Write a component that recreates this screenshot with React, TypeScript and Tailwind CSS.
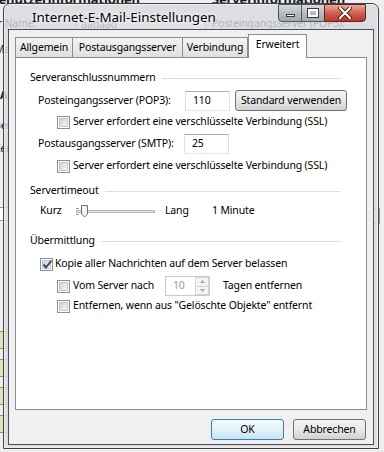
import React from 'react';

const Check = ({ checked = false }: { checked?: boolean }) => (
  <span className="flex h-[13px] w-[13px] shrink-0 items-center justify-center border border-[#8e8f8f] bg-white">
    <span className="relative flex h-[9px] w-[9px] items-center justify-center border border-[#c4c6c9] bg-linear-to-br from-[#cfd2d6] to-[#f7f7f7]">
      {checked && (
        <svg className="absolute -left-[1px] -top-[2px]" width="11" height="11" viewBox="0 0 11 11">
          <path d="M1.5 5.5 L4 8.5 L9.5 1.5" fill="none" stroke="#2a4a80" strokeWidth="2" />
        </svg>
      )}
    </span>
  </span>
);

const GroupHeader = ({ title }: { title: string }) => (
  <div className="mr-[25px] flex h-[16px] items-center">
    <span>{title}</span>
    <span className="ml-[6px] h-px flex-1 bg-[#d5dfe5]" />
  </div>
);

const TextBox = ({ value }: { value: string }) => (
  <div className="flex h-[20px] w-[45px] shrink-0 items-center border border-[#abadb3] border-b-[#e3e9ef] border-x-[#dbdfe6] bg-white pl-[7px]">
    {value}
  </div>
);

const Btn = ({ label, def = false, w }: { label: string; def?: boolean; w: string }) => (
  <div
    className={`flex h-[21px] ${w} shrink-0 items-center justify-center rounded-[3px] border ${
      def
        ? 'border-[#3c7fb1] bg-linear-to-b from-[#f2f9fd] via-[#e3f2fb] to-[#c6e2f3]'
        : 'border-[#707070] bg-linear-to-b from-[#f3f3f3] via-[#e8e8e8] to-[#d2d2d2]'
    }`}
  >
    {label}
  </div>
);

const Tab = ({ label, w, active = false }: { label: string; w: string; active?: boolean }) => (
  <div
    className={`flex ${w} shrink-0 items-center justify-center border border-[#898c95] ${
      active
        ? 'relative z-10 -mb-px h-[24px] border-b-0 bg-white pb-[3px]'
        : 'h-[20px] border-b-0 bg-linear-to-b from-[#f3f3f3] to-[#e0e0e0] -ml-px first:ml-0'
    }`}
  >
    {label}
  </div>
);

export default function App() {
  return (
    <div className="relative h-[452px] w-[384px] overflow-hidden whitespace-nowrap bg-[#efefef] font-['Noto_Sans',sans-serif] text-[10.5px] tracking-[-0.15px] text-black">
      {/* window behind the dialog */}
      <div className="flex text-[#1a1a1a]">
        <div className="w-[222px] shrink-0 -ml-[10px]">
          <div className="-mt-[9px] h-[16px] text-[13px] font-bold leading-[16px]">Benutzerinformationen</div>
          <div className="mt-[9px] flex h-[16px] items-center gap-[40px]">
            <span className="-ml-[2px]">Ihr Name:</span>
            <span className="h-[16px] w-[130px] border border-[#999] bg-white pl-1">aadaad</span>
          </div>
          <div className="mt-[10px] -ml-[4px]">E-Mail-Adresse:</div>
          <div className="mt-[30px] pl-[10px] font-bold">Anmeldeinformationen</div>
          <div className="mt-[14px] pl-[4px]">Benutzername:</div>
          <div className="mt-[8px] pl-[4px]">Kennwort:</div>
          <div className="ml-[8px] mt-[50px] h-[14px] w-[60px] border border-[#999] bg-white" />
          <div className="mt-[110px] flex flex-col gap-[10px] pl-[8px]">
            {[0, 1, 2, 3].map((i) => (
              <span key={i} className="h-[18px] w-[12px] border border-[#9a9470] bg-[#e4dfb8]" />
            ))}
          </div>
        </div>
        <div className="flex-1">
          <div className="-mt-[9px] h-[16px] text-[13px] font-bold leading-[16px]">Serverinformationen</div>
          <div className="mt-[9px] flex h-[16px] items-center gap-[44px]">
            <span>Posteingangsserver (POP3):</span>
            <span className="h-[16px] w-[40px] border border-[#999] bg-white pl-1">ds</span>
          </div>
          <div className="mt-[12px] flex h-[16px] items-center justify-end">
            <span className="h-[16px] w-[20px] border border-[#999] bg-white pl-1">ds</span>
          </div>
          <div className="mt-[52px] pl-[148px] leading-[11px]">
            Ko
            <br />
            de
            <br />
            Ä
            <br />
            h)
          </div>
          <div className="ml-[148px] mt-[52px] h-[16px] w-[20px] border border-[#999] bg-white pl-[1px]">e</div>
          <div className="mt-[176px] pl-[150px]">er</div>
        </div>
      </div>

      {/* dialog */}
      <div className="absolute left-[3px] top-[3px] flex h-[446px] w-[376px] flex-col rounded-t-[7px] border border-[#3f4348] bg-[#d7dadd]/80 shadow-[inset_0_0_0_1px_rgba(255,255,255,0.5)]">
        <div className="flex h-[25px] shrink-0 items-start">
          <span className="ml-[28px] mt-[3px] text-[13.4px] leading-[20px] tracking-normal text-black [text-shadow:0_0_6px_#fff,0_0_3px_#fff]">
            Internet-E-Mail-Einstellungen
          </span>
          <div className="ml-auto mr-[12px] flex">
            <div className="flex h-[18px] w-[24px] items-center justify-center rounded-bl-[4px] border border-[#50565c] bg-linear-to-b from-[#d6dade] via-[#b7bcc1] to-[#a3a9ae]">
              <span className="mt-[5px] h-[3px] w-[9px] border border-[#3a3a3a] bg-white" />
            </div>
            <div className="-ml-px flex h-[18px] w-[24px] items-center justify-center border border-[#50565c] bg-linear-to-b from-[#d6dade] via-[#b7bcc1] to-[#a3a9ae]">
              <span className="h-[8px] w-[10px] border-2 border-white outline outline-1 outline-[#3a3a3a]" />
            </div>
            <div className="-ml-px flex h-[18px] w-[42px] items-center justify-center rounded-br-[4px] border border-[#5a2a22] bg-linear-to-b from-[#e9a99c] via-[#d0604c] to-[#b8382a]">
              <svg width="14" height="12" viewBox="0 0 14 12">
                <path d="M2 1 L12 11 M12 1 L2 11" stroke="#4a1a14" strokeWidth="4" strokeLinecap="round" />
                <path d="M2 1 L12 11 M12 1 L2 11" stroke="#fff" strokeWidth="2.2" strokeLinecap="round" />
              </svg>
            </div>
          </div>
        </div>

        <div className="mx-[4px] mb-[3px] flex flex-1 flex-col border border-[#4a4f55] bg-[#f0f0f0] px-[6px] pt-[3px]">
          {/* tabs */}
          <div className="flex h-[24px] items-end">
            <Tab label="Allgemein" w="w-[58px]" />
            <Tab label="Postausgangsserver" w="w-[111px]" />
            <Tab label="Verbindung" w="w-[66px]" />
            <Tab label="Erweitert" w="w-[59px]" active />
          </div>

          <div className="flex h-[353px] flex-col border border-[#898c95] bg-white pl-[14px] pt-[12px]">
            <GroupHeader title="Serveranschlussnummern" />
            <div className="ml-[8px] mt-[4px] flex h-[21px] items-center">
              <span className="w-[147px] shrink-0">Posteingangsserver (POP3):</span>
              <TextBox value="110" />
              <div className="ml-[5px]">
                <Btn label="Standard verwenden" w="w-[112px]" />
              </div>
            </div>
            <div className="ml-[27px] mt-[4px] flex h-[14px] items-center gap-[3px]">
              <Check />
              <span>Server erfordert eine verschlüsselte Verbindung (SSL)</span>
            </div>
            <div className="ml-[8px] mt-[5px] flex h-[20px] items-center">
              <span className="w-[146px] shrink-0">Postausgangsserver (SMTP):</span>
              <TextBox value="25" />
            </div>
            <div className="ml-[27px] mt-[5px] flex h-[14px] items-center gap-[3px]">
              <Check />
              <span>Server erfordert eine verschlüsselte Verbindung (SSL)</span>
            </div>

            <div className="mt-[10px]">
              <GroupHeader title="Servertimeout" />
            </div>
            <div className="ml-[10px] mt-[3px] flex h-[18px] items-center">
              <span className="w-[36px] shrink-0">Kurz</span>
              <svg width="80" height="18" viewBox="0 0 80 18">
                <rect x="0.5" y="8.5" width="78" height="2" fill="#e4e6e8" stroke="#b4b6b8" />
                <path d="M0 6.5 H3 M0 12.5 H3" stroke="#9a9a9a" />
                <path d="M5.5 3.5 H11.5 V12 L8.5 15 L5.5 12 Z" fill="#f2f2f2" stroke="#707070" />
              </svg>
              <span className="ml-[9px] w-[47px] shrink-0">Lang</span>
              <span>1 Minute</span>
            </div>

            <div className="mt-[13px]">
              <GroupHeader title="Übermittlung" />
            </div>
            <div className="ml-[10px] mt-[7px] flex h-[16px] items-center gap-[2px]">
              <Check checked />
              <span>Kopie aller Nachrichten auf dem Server belassen</span>
            </div>
            <div className="ml-[27px] mt-[4px] flex h-[20px] items-center">
              <Check />
              <span className="ml-[3px] w-[92px] shrink-0">Vom Server nach</span>
              <div className="flex h-[20px] w-[45px] shrink-0 border border-[#c8cacd] bg-white">
                <span className="flex flex-1 items-center pl-[7px] text-[#9b9b9b]">10</span>
                <div className="flex w-[14px] flex-col">
                  <span className="flex flex-1 items-center justify-center border border-[#d4d6d8] bg-[#f4f4f4]">
                    <svg width="5" height="3" viewBox="0 0 5 3">
                      <path d="M0 3 L2.5 0 L5 3 Z" fill="#a8a8a8" />
                    </svg>
                  </span>
                  <span className="-mt-px flex flex-1 items-center justify-center border border-[#d4d6d8] bg-[#f4f4f4]">
                    <svg width="5" height="3" viewBox="0 0 5 3">
                      <path d="M0 0 L2.5 3 L5 0 Z" fill="#a8a8a8" />
                    </svg>
                  </span>
                </div>
              </div>
              <span className="ml-[13px]">Tagen entfernen</span>
            </div>
            <div className="ml-[27px] mt-[3px] flex h-[14px] items-center gap-[3px]">
              <Check />
              <span>Entfernen, wenn aus "Gelöschte Objekte" entfernt</span>
            </div>
          </div>

          <div className="mt-[9px] flex justify-end gap-[9px] pr-[1px]">
            <Btn label="OK" def w="w-[73px]" />
            <Btn label="Abbrechen" w="w-[73px]" />
          </div>
        </div>
      </div>
    </div>
  );
}
